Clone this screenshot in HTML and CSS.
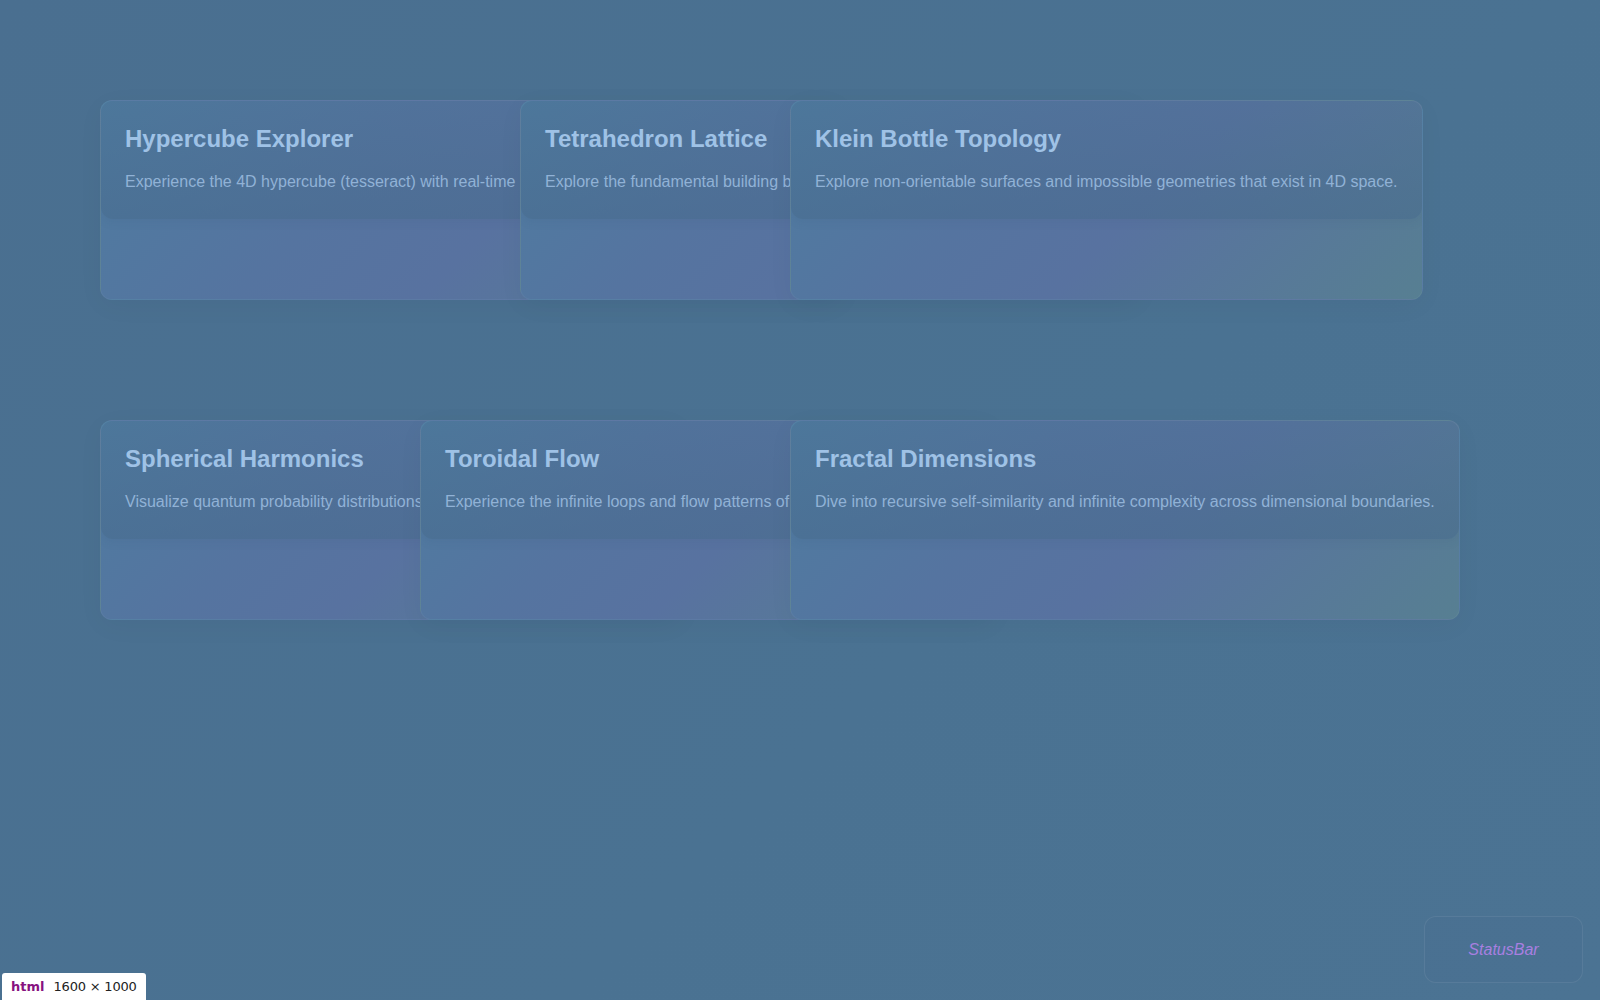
FILE: index.html
```html
<!DOCTYPE html>
<html lang="en">
<head>
<meta charset="utf-8">
<title>Dimensions</title>
<link rel="stylesheet" href="styles.css">
</head>
<body>
<main class="page">
  <section class="row row-a">
    <article class="card">
      <div class="card-head">
        <h2 class="card-title">Hypercube Explorer</h2>
        <p class="card-desc">Experience the 4D hypercube (tesseract) with real-time rotation across all four spatial dimensions.</p>
      </div>
    </article>
    <article class="card">
      <div class="card-head">
        <h2 class="card-title">Tetrahedron Lattice</h2>
        <p class="card-desc">Explore the fundamental building blocks of higher-dimensional crystal structures.</p>
      </div>
    </article>
    <article class="card">
      <div class="card-head">
        <h2 class="card-title">Klein Bottle Topology</h2>
        <p class="card-desc">Explore non-orientable surfaces and impossible geometries that exist in 4D space.</p>
      </div>
    </article>
  </section>
  <section class="row row-b">
    <article class="card">
      <div class="card-head">
        <h2 class="card-title">Spherical Harmonics</h2>
        <p class="card-desc">Visualize quantum probability distributions on the surface of a hypersphere.</p>
      </div>
    </article>
    <article class="card">
      <div class="card-head">
        <h2 class="card-title">Toroidal Flow</h2>
        <p class="card-desc">Experience the infinite loops and flow patterns of a four-dimensional torus.</p>
      </div>
    </article>
    <article class="card">
      <div class="card-head">
        <h2 class="card-title">Fractal Dimensions</h2>
        <p class="card-desc">Dive into recursive self-similarity and infinite complexity across dimensional boundaries.</p>
      </div>
    </article>
  </section>
</main>
<div class="status-bar">StatusBar</div>
<div class="inspect-tag"><span class="inspect-tag-name">html</span><span class="inspect-tag-size">1600 × 1000</span></div>
</body>
</html>
```
FILE: styles.css
```css
* { box-sizing: border-box; }
html, body { margin: 0; padding: 0; }
body {
  width: 1600px;
  height: 1000px;
  overflow: hidden;
  font-family: "Liberation Sans", Arial, sans-serif;
  background: linear-gradient(135deg, #4a6f90 0%, #4a7292 60%, #4b7393 100%);
  position: relative;
}
.page {
  padding: 100px 0 0 100px;
  display: flex;
  flex-direction: column;
  gap: 120px;
}
.row {
  display: grid;
}
.row-a { grid-template-columns: 420px 270px 633px; }
.row-b { grid-template-columns: 320px 370px 669px; }
.card {
  width: max-content;
  justify-self: start;
  height: 200px;
  border-radius: 12px;
  border: 1px solid rgba(255, 255, 255, 0.045);
  background: linear-gradient(135deg, #4e7ca0 0%, #5574a0 35%, #5872a0 55%, #577f92 100%);
  box-shadow: 0 6px 28px rgba(0, 0, 0, 0.035);
  overflow: hidden;
}
.card-head {
  padding: 23px 24px 25px;
  border-radius: 12px;
  background: linear-gradient(180deg, rgba(74, 110, 145, 0.35) 0%, rgba(70, 106, 140, 0.55) 100%);
  box-shadow: 0 4px 10px rgba(40, 70, 100, 0.07);
}
.card-title {
  margin: 0 0 17px;
  font-size: 24px;
  line-height: 29px;
  font-weight: 700;
  color: #9fc2e6;
  white-space: nowrap;
}
.card-desc {
  margin: 0;
  font-size: 16px;
  line-height: 24px;
  color: #91b2d6;
  white-space: nowrap;
}
.status-bar {
  position: absolute;
  right: 17px;
  bottom: 17px;
  width: 159px;
  height: 67px;
  border-radius: 12px;
  border: 1px solid rgba(255, 255, 255, 0.08);
  background: rgba(74, 112, 145, 0.6);
  display: flex;
  align-items: center;
  justify-content: center;
  font-style: italic;
  font-size: 16px;
  color: #a87fe0;
}
.inspect-tag {
  position: absolute;
  left: 2px;
  bottom: 0;
  height: 27px;
  padding: 0 9px 0 9px;
  background: #ffffff;
  border-radius: 3px 3px 0 0;
  display: flex;
  align-items: center;
  gap: 9px;
  font-family: "DejaVu Sans", sans-serif;
  font-size: 13px;
}
.inspect-tag-name { color: #881280; font-weight: 700; }
.inspect-tag-size { color: #222222; letter-spacing: -0.2px; }
```
